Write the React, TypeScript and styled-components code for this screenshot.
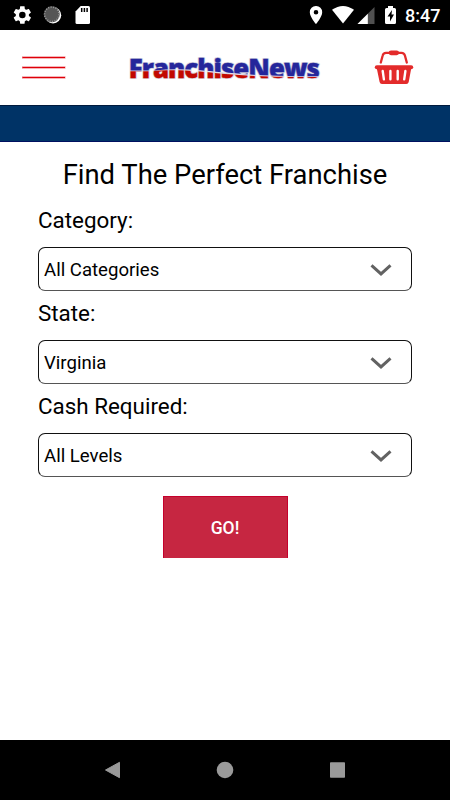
import React from 'react';
import styled, { createGlobalStyle } from 'styled-components';

const GlobalStyle = createGlobalStyle`
  * { box-sizing: border-box; }
  body { margin: 0; background: #fff; font-family: Roboto, sans-serif; color: #000; }
`;

const Screen = styled.div`
  width: 450px;
  height: 800px;
  display: flex;
  flex-direction: column;
  background: #fff;
  overflow: hidden;
`;

const StatusBar = styled.div`
  height: 30px;
  flex: none;
  background: #000;
  display: flex;
  justify-content: space-between;
`;

const StatusGroup = styled.div`
  display: flex;
`;

const Clock = styled.span`
  color: #fff;
  font-size: 18px;
  font-weight: 500;
  line-height: 32px;
  width: 46px;
  padding-left: 1px;
`;

const Header = styled.header`
  height: 75px;
  flex: none;
  display: flex;
  justify-content: space-between;
`;

const IconButton = styled.button`
  border: 0;
  padding: 0;
  background: none;
  display: block;
`;

const Band = styled.div`
  height: 37px;
  flex: none;
  background: #003366;
  border-top: 1px solid #001a3d;
  border-bottom: 1px solid #001060;
`;

const Form = styled.main`
  flex: 1;
  padding: 15px 38px 0;
  display: flex;
  flex-direction: column;
`;

const Title = styled.h1`
  margin: 0;
  font-size: 27.4px;
  line-height: 36px;
  font-weight: 400;
  text-align: center;
  white-space: nowrap;
`;

const Field = styled.div`
  height: 93px;
  display: flex;
  flex-direction: column;
`;

const Label = styled.label`
  height: 54px;
  line-height: 55px;
  font-size: 22.4px;
`;

const Select = styled.div`
  height: 44px;
  flex: none;
  border: 1px solid #111;
  border-bottom-color: #555;
  border-radius: 7px;
  padding: 2px 19px 0 5px;
  display: flex;
  align-items: center;
  justify-content: space-between;
  font-size: 18.6px;
`;

const Fields = styled.div`
  padding-bottom: 5px;
`;

const GoButton = styled.button`
  width: 125px;
  height: 62px;
  margin: 19px auto 0;
  padding: 0;
  border: 1px solid #c5002c;
  border-bottom: 0;
  background: #c62641;
  color: #fff;
  font: 500 17.5px Roboto, sans-serif;
`;

const NavBar = styled.nav`
  height: 60px;
  flex: none;
  background: #000;
  display: flex;
  justify-content: center;
`;

const Logo = () => (
  <svg width="210" height="75" viewBox="120 30 210 75">
    <defs>
      <pattern id="flag" patternUnits="userSpaceOnUse" x="120" y="30" width="210" height="75">
        <g transform="translate(-120 -30)">
          <path d="M120 30H330V105H120Z" fill="#e4dce8" />
          <path d="M120 30H330V76.200C300 76.700 270 75.800 250 74.500C230 73.200 212 71.200 200 70.300C185 69 170 68.500 155 70.500H120Z" fill="#25269b" />
          <path d="M120 71.300H150C165 69.800 182 70 200 71.500C215 73 230 74.500 250 75.700C270 76.700 300 77.300 330 76.800V105H120Z" fill="#c20800" />
        </g>
      </pattern>
    </defs>
    <g fontFamily="Open Sans, sans-serif" fontWeight="800" fontSize="26.500" strokeLinejoin="round">
      <text x="128.800" y="77.500" letterSpacing="-1" textLength="190" lengthAdjust="spacingAndGlyphs" fill="#d9d9e2" stroke="#d9d9e2" strokeWidth="2.200">FranchiseNews</text>
      <text x="128.800" y="77.500" letterSpacing="-1" textLength="190" lengthAdjust="spacingAndGlyphs" fill="url(#flag)" stroke="url(#flag)" strokeWidth=".35">FranchiseNews</text>
    </g>
  </svg>
);

const Chevron = () => (
  <svg width="22" height="14" viewBox="0 0 22 14">
    <path d="M1.500 2.300L11 10.900L20.500 2.300" fill="none" stroke="#626262" strokeWidth="3" />
  </svg>
);

const fields = [
  { label: 'Category:', value: 'All Categories' },
  { label: 'State:', value: 'Virginia' },
  { label: 'Cash Required:', value: 'All Levels' },
];

export default function App() {
  return (
    <Screen>
      <GlobalStyle />
      <StatusBar>
        <svg width="100" height="30" viewBox="0 0 100 30">
          <g transform="translate(11.8 4.5) scale(.88)">
            <path fill="#fff" fillRule="evenodd" d="M19.4 13a8 8 0 0 0 0-2l2.1-1.6c.2-.2.3-.5.1-.7l-2-3.4c-.1-.2-.4-.3-.6-.2l-2.5 1a7 7 0 0 0-1.700-1L14.500 2.400c0-.2-.2-.4-.5-.4h-4c-.3 0-.5.2-.5.4l-.4 2.700a7 7 0 0 0-1.700 1l-2.500-1c-.2-.1-.5 0-.6.2l-2 3.400c-.1.2 0 .5.1.7L4.600 11a8 8 0 0 0 0 2l-2.200 1.600c-.2.2-.2.5-.1.7l2 3.400c.1.2.4.3.6.2l2.500-1a7 7 0 0 0 1.700 1l.4 2.700c0 .2.2.4.5.4h4c.3 0 .5-.2.5-.4l.3-2.700a7 7 0 0 0 1.700-1l2.500 1c.2.1.5 0 .6-.2l2-3.400c.1-.2.1-.5-.1-.7ZM12 15.700a3.700 3.700 0 1 1 0-7.400 3.700 3.700 0 0 1 0 7.400Z" />
          </g>
          <circle cx="53" cy="15.200" r="8.200" fill="#fff" />
          <circle cx="51.800" cy="14.300" r="8" fill="#555" />
          <circle cx="51.800" cy="14.300" r="7.200" fill="none" stroke="#999" strokeWidth="1.600" strokeDasharray="1 1.500" />
          <path d="M80.700 6H88.500Q90 6 90 7.500V22.500Q90 24 88.500 24H77Q75.500 24 75.500 22.500V11.500Z" fill="#fff" />
          <path d="M81.700 8V12M84.400 8V12M87.100 8V12" stroke="#000" strokeWidth="1.500" />
        </svg>
        <StatusGroup>
          <svg width="104" height="30" viewBox="300 0 104 30">
            <path fillRule="evenodd" d="M316 6a6 6 0 0 0-6.200 6.200C309.800 17 316 24 316 24S322.200 17 322.200 12.200A6 6 0 0 0 316 6ZM316 14.500a2.300 2.300 0 1 1 0-4.600 2.300 2.300 0 0 1 0 4.600Z" fill="#fff" />
            <path d="M332 9.800Q343 2.200 354 9.800L343 23.400Z" fill="#fff" />
            <path d="M357.500 24L374.500 7V24Z" fill="#505050" />
            <path d="M357.500 24L367.800 13.700V24Z" fill="#fff" />
            <path d="M388 6H393V8H394.500Q396 8 396 9.500V22.500Q396 24 394.500 24H386.500Q385 24 385 22.500V9.500Q385 8 386.500 8H388Z" fill="#fff" />
            <path d="M392 10L387.500 16.500H390V21.500L394 14.500H391.500Z" fill="#000" />
          </svg>
          <Clock>8:47</Clock>
        </StatusGroup>
      </StatusBar>
      <Header>
        <IconButton aria-label="Menu">
          <svg width="120" height="75" viewBox="0 30 120 75">
            <path d="M22 57.500H65.500M22 67.500H65.500M22 77.500H65.500" stroke="#f29a9f" strokeWidth="2.500" />
            <path d="M22.500 57.500H65M22.500 67.500H65M22.500 77.500H65" stroke="#df0009" strokeWidth="1" />
          </svg>
        </IconButton>
        <Logo />
        <IconButton aria-label="Basket">
          <svg width="120" height="75" viewBox="330 30 120 75">
            <g fill="none" stroke="#e32b2b" strokeLinecap="round" strokeLinejoin="round">
              <path d="M380.800 62.500L382.700 55.500Q383.300 52.800 386 52.800H401.500Q404.200 52.800 404.900 55.500L406.800 62.500" strokeWidth="2.300" />
              <path d="M391 52.800H396.700" strokeWidth="4.700" />
              <path d="M376.800 67.300H411.200" strokeWidth="4" />
            </g>
            <path d="M376.500 67H411.500L408.700 82Q408.300 84 406.300 84H382Q380 84 379.600 82Z" fill="#e32b2b" />
            <path d="M382.700 71L383.900 79.300M390.400 71V79.300M397.700 71V79.300M405.400 71L404.200 79.300" stroke="#fff" strokeWidth="2.400" strokeLinecap="round" />
          </svg>
        </IconButton>
      </Header>
      <Band />
      <Form>
        <Title>Find The Perfect Franchise</Title>
        <Fields>
          {fields.map(({ label, value }) => (
            <Field key={label}>
              <Label>{label}</Label>
              <Select><span>{value}</span><Chevron /></Select>
            </Field>
          ))}
        </Fields>
        <GoButton>GO!</GoButton>
      </Form>
      <NavBar>
        <svg width="290" height="60" viewBox="80 740 290 60">
          <path d="M105.500 770L119.500 762.300V777.700Z" fill="#999" stroke="#999" strokeWidth="1" strokeLinejoin="round" />
          <circle cx="225" cy="770" r="8.300" fill="#999" />
          <rect x="330" y="762.200" width="15" height="15.600" rx=".8" fill="#999" />
        </svg>
      </NavBar>
    </Screen>
  );
}
